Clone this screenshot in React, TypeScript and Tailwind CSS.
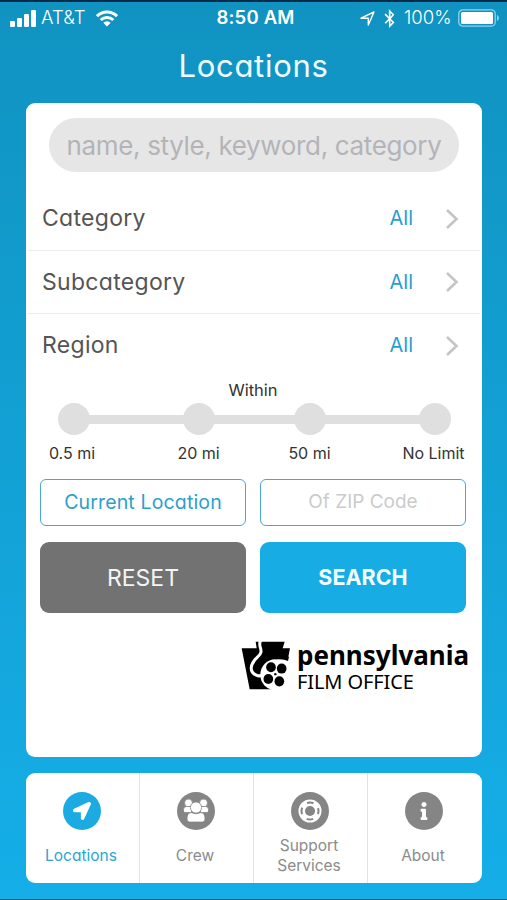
import type { ReactNode } from "react";
import { FaBluetoothB, FaInfo, FaLocationArrow } from "react-icons/fa";

const geo = "font-['Inter',sans-serif] [font-feature-settings:'cv11']";

function StatusBar() {
    return (
        <div className="flex h-[32px] items-center px-[10px] font-['Inter',sans-serif] text-[18.5px] text-white">
            <div className="flex flex-1 items-center">
                <svg width="26" height="17" viewBox="0 0 26 17" fill="currentColor">
                    <rect x="0" y="11" width="5" height="6" rx="1.2" />
                    <rect x="7" y="8" width="5" height="9" rx="1.2" />
                    <rect x="14" y="4" width="5" height="13" rx="1.2" />
                    <rect x="21" y="0" width="5" height="17" rx="1.2" />
                </svg>
                <span className="ml-[5px] w-[50px] whitespace-nowrap font-light tracking-[0.1px]">AT&amp;T</span>
                <svg className="ml-[5px]" width="22" height="17" viewBox="0 0 22 17" fill="none" stroke="currentColor" strokeWidth="3">
                    <path d="M1 6.2a14.2 14.2 0 0 1 20 0" />
                    <path d="M4.7 10a9 9 0 0 1 12.6 0" />
                    <path d="M11 16.5 7.3 12.8a5.3 5.3 0 0 1 7.4 0z" fill="currentColor" stroke="none" />
                </svg>
            </div>
            <span className="ml-[4px] whitespace-nowrap font-semibold tracking-[0.2px]">8:50 AM</span>
            <div className="flex flex-1 items-center justify-end">
                <svg width="15" height="15" viewBox="0 0 15 15" fill="none" stroke="currentColor" strokeWidth="1.4" strokeLinejoin="round">
                    <path d="M1 7.2 14 1 8.3 14V7.2z" />
                </svg>
                <FaBluetoothB className="ml-[7px] h-[19px] w-[15px]" />
                <span className="ml-[7px] w-[49px] whitespace-nowrap font-light">100%</span>
                <svg className="-mr-[3px] ml-[5px]" width="42" height="18" viewBox="0 0 42 18">
                    <rect x="0.8" y="0.8" width="36.4" height="16.4" rx="4" fill="none" stroke="#8fd3ee" strokeWidth="1.3" />
                    <rect x="3" y="3" width="32" height="12" rx="1.5" fill="white" />
                    <path d="M39 6v6c2.5-1 2.5-5 0-6z" fill="#8fd3ee" />
                </svg>
            </div>
        </div>
    );
}

function FilterRow({ label, last }: { label: string; last?: boolean }) {
    return (
        <div className={`mx-[2px] flex h-[63.5px] items-center border-b pl-[14px] pr-[21px] ${last ? "border-transparent" : "border-[#ececec]"}`}>
            <span className="flex-1 text-[23px] tracking-[0.3px] text-[#555]">{label}</span>
            <span className="text-[20px] text-[#279fd0]">All</span>
            <svg className="ml-[32px] mt-[1px]" width="14" height="22" viewBox="0 0 14 22" fill="none" stroke="#c4c4c4" strokeWidth="2.6">
                <path d="m2 2 9.5 9L2 20" />
            </svg>
        </div>
    );
}

const stops = [
    { label: "0.5 mi", className: "left-[15.5px]", labelClassName: "-ml-[3px]" },
    { label: "20 mi", className: "left-[140.5px]", labelClassName: "" },
    { label: "50 mi", className: "left-[251.5px]", labelClassName: "" },
    { label: "No Limit", className: "left-[376.5px]", labelClassName: "-ml-[2px]" },
];

function DistanceSlider() {
    return (
        <div className="text-[16px] text-[#333]">
            <p className="-ml-[2px] text-center text-[16.5px] leading-[24px]">Within</p>
            <div className="relative mx-[16px] mt-[1px] h-[65px]">
                <div className="absolute left-[31px] top-[12px] h-[9px] w-[361px] bg-[#dfdfdf]" />
                {stops.map((stop) => (
                    <div key={stop.label} className={`absolute top-0 flex w-[32px] flex-col items-center ${stop.className}`}>
                        <span className="size-[32px] rounded-full bg-[#dfdfdf]" />
                        <span className={`mt-[6px] whitespace-nowrap leading-[24px] ${stop.labelClassName}`}>{stop.label}</span>
                    </div>
                ))}
            </div>
        </div>
    );
}

function FilmOfficeLogo() {
    return (
        <div className="flex text-black">
            <svg width="50" height="49" viewBox="16 18 150 142" preserveAspectRatio="none">
                <path d="M60 20H147L141 39H163L139 158H42L18 39H63z" fill="black" />
                <path d="M119 71A45 45 0 1 0 119 161H166V71z" fill="white" />
                <path d="M119 71Q138 68 157 76L160 64H119z" fill="black" />
                <path d="M76 14C62 36 90 44 66 64C42 86 40 108 62 117C72 122 80 118 88 112" fill="none" stroke="white" strokeWidth="9" />
                <circle cx="106" cy="94" r="14.5" />
                <circle cx="138" cy="98" r="14.5" />
                <circle cx="98" cy="128" r="14.5" />
                <circle cx="131" cy="135" r="14.5" />
                <circle cx="119" cy="114" r="3.5" />
            </svg>
            <div className="ml-[6px] whitespace-nowrap font-['Noto_Sans',sans-serif]">
                <p className="text-[26px] font-bold leading-[28px]">pennsylvania</p>
                <p className="text-[20px] leading-[26px] tracking-[-0.1px]">FILM OFFICE</p>
            </div>
        </div>
    );
}

function CrewIcon() {
    return (
        <svg width="26" height="24" viewBox="0 0 26 24" fill="white" stroke="#858585" strokeWidth="0.8">
            <circle cx="5.5" cy="4" r="4" />
            <circle cx="20.5" cy="4" r="4" />
            <path d="M0.5 13V10.5q0-3 3-3h5v6H2q-1.5 0-1.5-1.500zM25.5 13V10.5q0-3-3-3h-5v6H24q1.500 0 1.500-1.500z" />
            <path d="M4 20q0-6 4-6.5 5 2.500 10 0 4 .5 4 6.500 0 3-2.500 3h-13Q4 23 4 20z" />
            <circle cx="13" cy="8.5" r="5.6" />
        </svg>
    );
}

function SupportIcon() {
    return (
        <svg width="24" height="24" viewBox="0 0 24 24" fill="none">
            <circle cx="12" cy="12" r="11.5" fill="white" />
            <circle cx="12" cy="12" r="5" fill="#858585" />
            <circle cx="12" cy="12" r="8.5" stroke="#858585" strokeWidth="2" strokeDasharray="6.5 6.852" strokeDashoffset="3.25" />
        </svg>
    );
}

function Tab({ label, icon, active }: { label: string; icon: ReactNode; active?: boolean }) {
    return (
        <div className={`flex flex-col items-center border-r border-[#e3e3e3] pr-px pt-[19px] last:border-transparent ${active ? "text-[#2ba5d3]" : "text-[#8b8b8b]"}`}>
            <span className={`flex size-[38px] items-center justify-center rounded-full text-white ${active ? "bg-[#1babe2]" : "bg-[#858585]"}`}>
                {icon}
            </span>
            <div className="-ml-[2px] mt-[4px] flex h-[44px] w-[80px] items-center justify-center text-center text-[15.5px] leading-[20.5px]">{label}</div>
        </div>
    );
}

export default function App() {
    return (
        <div className={`flex h-[900px] w-[507px] flex-col border-b border-t-2 border-b-[#075577] border-t-[#052c4b] bg-linear-to-b from-[#1093c1] to-[#15aee8] ${geo}`}>
            <StatusBar />
            <h1 className="h-[69px] pt-[10px] text-center text-[31px] leading-[44px] tracking-[0.7px] text-[#effcff]">Locations</h1>

            <main className="mx-[26px] mr-[25px] h-[654px] rounded-[9px] bg-white pt-[15px]">
                <div className="mb-[15px] ml-[23px] flex h-[54px] w-[410px] items-center justify-center rounded-full bg-[#e6e6e7] font-['Inter',sans-serif] text-[26px] tracking-[-0.35px] text-[#b4b4b8] [font-feature-settings:normal]">
                    <span className="whitespace-nowrap">name, style, keyword, category</span>
                </div>
                <FilterRow label="Category" />
                <FilterRow label="Subcategory" />
                <FilterRow label="Region" last />
                <DistanceSlider />

                <div className="ml-[14px] mt-[11px] grid w-[426px] grid-cols-2 gap-x-[14px] gap-y-[16px]">
                    <button className="h-[47px] rounded-[6px] border-[1.5px] border-[#4aa8d0] pt-[2px] text-[19.5px] tracking-[0.15px] text-[#2d9fcb]">Current Location</button>
                    <button className="h-[47px] rounded-[6px] border-[1.5px] border-[#4aa8d0] text-[19px] text-[#cbcbcb]">Of ZIP Code</button>
                    <button className="h-[71px] rounded-[9px] bg-[#727272] pt-[2px] font-['Inter',sans-serif] text-[23px] text-[#f4f4f4]">RESET</button>
                    <button className="h-[71px] rounded-[9px] bg-[#17ace4] pt-[1px] text-[21.5px] font-bold text-[#f2fcff]">SEARCH</button>
                </div>

                <div className="ml-[215px] mt-[28px]">
                    <FilmOfficeLogo />
                </div>
            </main>

            <nav className="mx-[26px] mr-[25px] mt-[16px] grid h-[110px] grid-cols-4 rounded-[9px] bg-white">
                <Tab label="Locations" active icon={<FaLocationArrow className="size-[18px]" />} />
                <Tab label="Crew" icon={<CrewIcon />} />
                <Tab label="Support Services" icon={<SupportIcon />} />
                <Tab label="About" icon={<FaInfo className="size-[18px]" />} />
            </nav>
        </div>
    );
}
